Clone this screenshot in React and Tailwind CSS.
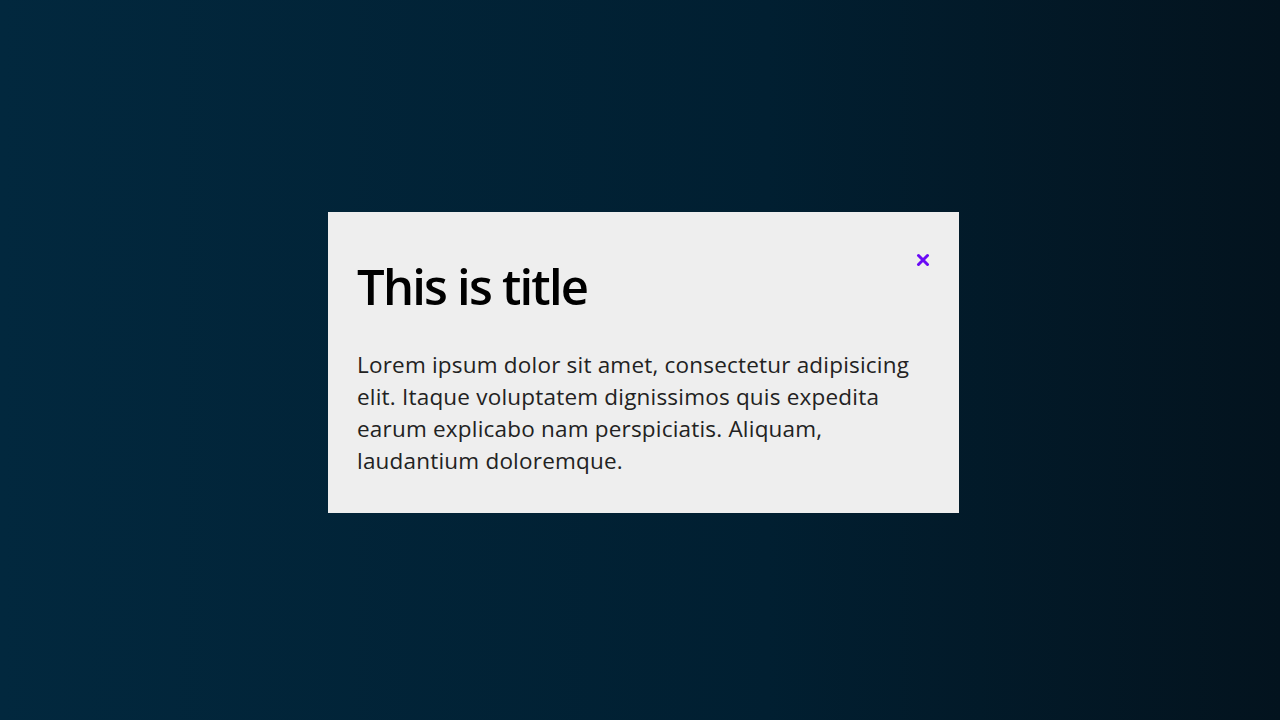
import React from 'react';

export default function App() {
  return (
    <div className="w-full h-[720px] flex items-center justify-center pl-[7px] pt-[5px] bg-gradient-to-r from-[#02283e] via-[#011f31] via-60% to-[#03131e]" style={{ fontFamily: '"Open Sans", sans-serif' }}>
      <div className="relative w-[631px] h-[301px] bg-[#eeeeee] px-[29px] pt-[42px]">
        <button className="absolute top-[41px] right-[29px] text-[#6a0af5]">
          <svg width="14" height="14" viewBox="0 0 14 14" className="block">
            <path d="M2.5 2.5L11.5 11.5M11.5 2.5L2.5 11.5" stroke="currentColor" strokeWidth="3" strokeLinecap="round" />
          </svg>
        </button>
        <h1 className="text-[49px] font-semibold leading-[64px] tracking-[-1.8px] text-black">This is title</h1>
        <p className="mt-[31px] text-[22.5px] leading-[32px] tracking-[0.2px] text-[#222]">
          Lorem ipsum dolor sit amet, consectetur adipisicing elit. Itaque voluptatem dignissimos quis expedita earum explicabo nam perspiciatis. Aliquam, laudantium doloremque.
        </p>
      </div>
    </div>
  );
}
